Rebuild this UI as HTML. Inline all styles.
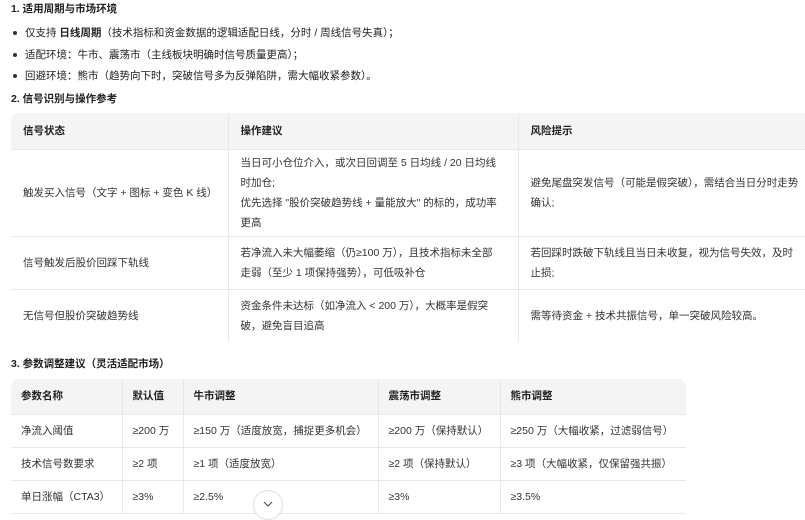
<!DOCTYPE html>
<html><head><meta charset="utf-8"><style>
*{margin:0;padding:0;box-sizing:border-box}
body{width:805px;height:510px;overflow:hidden;background:#fff;font-family:"Liberation Sans","Noto Sans CJK SC",sans-serif;font-size:10.5px;color:#222;position:relative}
.a{position:absolute;white-space:nowrap}
.dot{position:absolute;width:4px;height:4px;border-radius:50%;background:#333}
table{position:absolute;border-collapse:collapse;table-layout:fixed}
td,th{border-right:1px solid #e8e8e8;border-bottom:1px solid #e8e8e8;text-align:left;vertical-align:middle;padding:0 12px;line-height:20px;font-size:10.5px;color:#333}
th{background:#f4f4f4;font-weight:bold;color:#222}
td:last-child,th:last-child{border-right:none}
.w{border-radius:8px;overflow:hidden;position:absolute}
.t1 td:nth-child(2){padding-right:16px}
.t2 td,.t2 th{padding:0 10px;white-space:nowrap}
</style></head><body>
<div class="a" style="left:11px;top:1px;font-weight:bold">1. 适用周期与市场环境</div>
<div class="dot" style="left:13px;top:31px"></div>
<div class="a" style="left:25px;top:25px">仅支持 <b>日线周期</b>（技术指标和资金数据的逻辑适配日线，分时 / 周线信号失真）；</div>
<div class="dot" style="left:13px;top:53px"></div>
<div class="a" style="left:25px;top:47px">适配环境：牛市、震荡市（主线板块明确时信号质量更高）；</div>
<div class="dot" style="left:13px;top:74px"></div>
<div class="a" style="left:25px;top:68px">回避环境：熊市（趋势向下时，突破信号多为反弹陷阱，需大幅收紧参数）。</div>
<div class="a" style="left:11px;top:91px;font-weight:bold">2. 信号识别与操作参考</div>

<div class="w" style="left:11px;top:113px;width:800px;height:229px">
<table class="t1" style="left:0;top:0;width:800px">
<colgroup><col style="width:217px"><col style="width:290px"><col style="width:293px"></colgroup>
<tr style="height:36px"><th>信号状态</th><th>操作建议</th><th>风险提示</th></tr>
<tr style="height:87px"><td>触发买入信号（文字 + 图标 + 变色 K 线）</td><td>当日可小仓位介入，或次日回调至 5 日均线 / 20 日均线时加仓;<br>优先选择 "股价突破趋势线 + 量能放大" 的标的，成功率更高</td><td>避免尾盘突发信号（可能是假突破），需结合当日分时走势确认;</td></tr>
<tr style="height:53px"><td>信号触发后股价回踩下轨线</td><td>若净流入未大幅萎缩（仍≥100 万），且技术指标未全部走弱（至少 1 项保持强势），可低吸补仓</td><td>若回踩时跌破下轨线且当日未收复，视为信号失效，及时止损;</td></tr>
<tr style="height:53px"><td>无信号但股价突破趋势线</td><td>资金条件未达标（如净流入 &lt; 200 万），大概率是假突破，避免盲目追高</td><td>需等待资金 + 技术共振信号，单一突破风险较高。</td></tr>
</table></div>

<div class="a" style="left:11px;top:356px;font-weight:bold">3. 参数调整建议（灵活适配市场）</div>
<div class="w" style="left:11px;top:379px;width:675px;height:140px">
<table class="t2" style="left:0;top:0;width:675px">
<colgroup><col style="width:111px"><col style="width:61px"><col style="width:195px"><col style="width:122px"><col style="width:186px"></colgroup>
<tr style="height:35px"><th>参数名称</th><th>默认值</th><th>牛市调整</th><th>震荡市调整</th><th>熊市调整</th></tr>
<tr style="height:33px"><td>净流入阈值</td><td>≥200 万</td><td>≥150 万（适度放宽，捕捉更多机会）</td><td>≥200 万（保持默认）</td><td>≥250 万（大幅收紧，过滤弱信号）</td></tr>
<tr style="height:33px"><td>技术信号数要求</td><td>≥2 项</td><td>≥1 项（适度放宽）</td><td>≥2 项（保持默认）</td><td>≥3 项（大幅收紧，仅保留强共振）</td></tr>
<tr style="height:33px"><td>单日涨幅（CTA3）</td><td>≥3%</td><td>≥2.5%</td><td>≥3%</td><td>≥3.5%</td></tr>
</table></div>
<div class="a" style="left:253px;top:490px;width:30px;height:30px;border-radius:50%;border:1px solid #ddd;background:#fff"></div>
<svg class="a" style="left:262px;top:500px" width="12" height="8"><path d="M2 2l4 4 4-4" stroke="#555" fill="none" stroke-width="1.2"/></svg>
</body></html>
